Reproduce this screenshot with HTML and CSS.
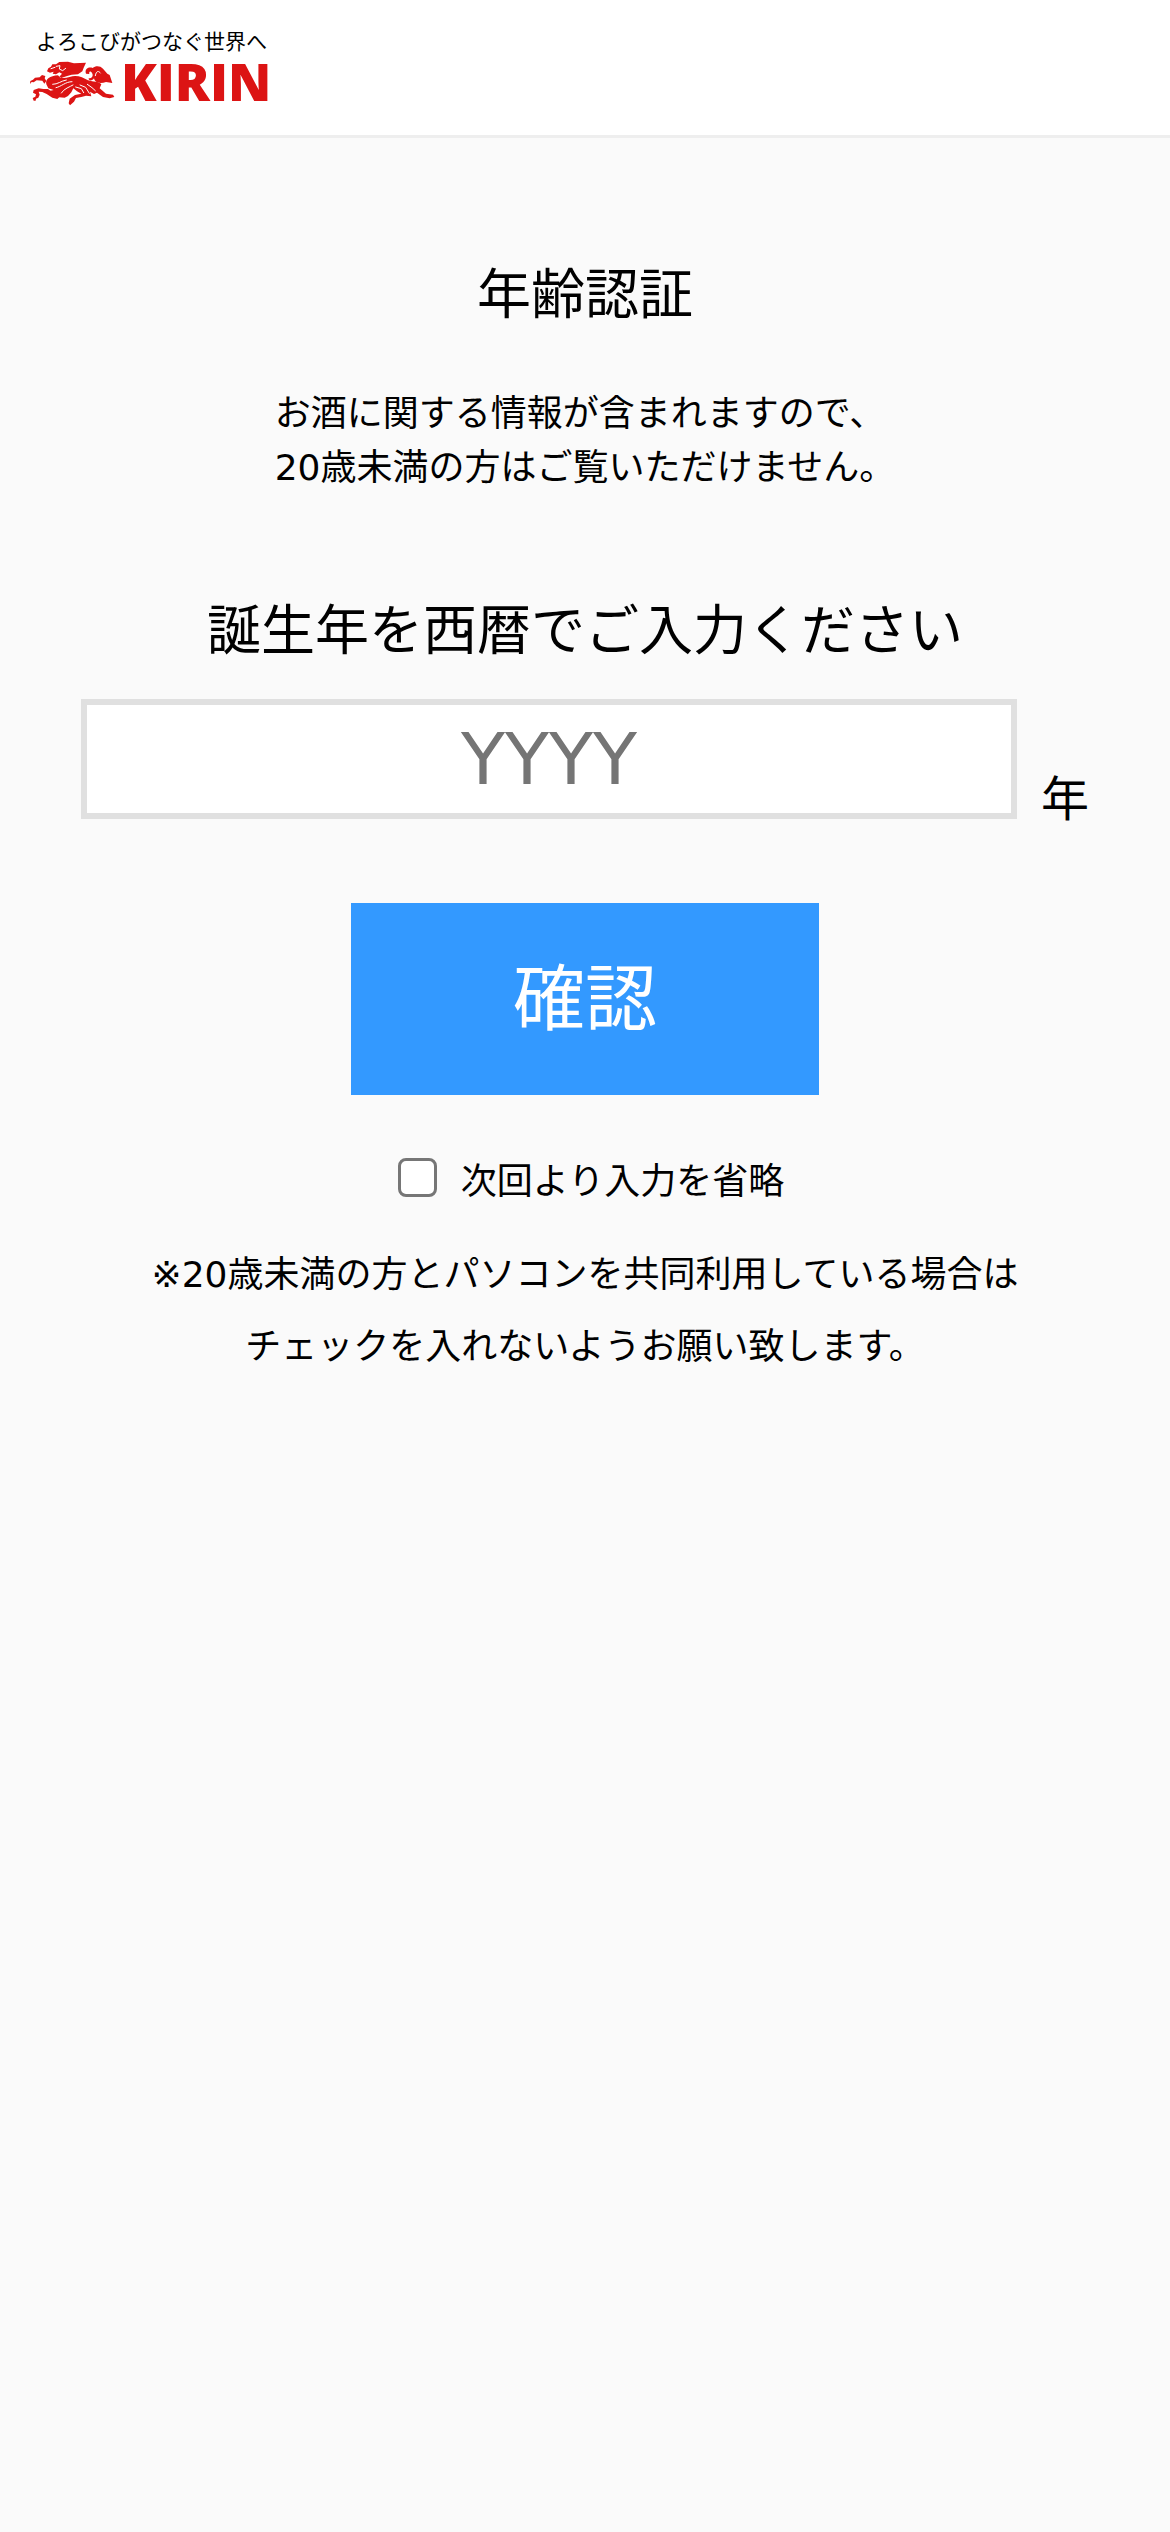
FILE: index.html
```html
<!DOCTYPE html>
<html lang="ja">
<head>
    <meta charset="UTF-8">
    <meta name="viewport" content="width=device-width, initial-scale=1.0">
    <title>年齢認証</title>
    <link rel="stylesheet" href="styles.css">
</head>
<body>

<header class="header">
    <a href="#" class="logo">
        <span class="logo-copy">よろこびがつなぐ世界へ</span>
        <span class="logo-brand">
            <svg class="logo-mark" viewBox="90 180 258 138" aria-hidden="true">
                <g fill="#dc1414">
                    <!-- 頭とたてがみ -->
                    <path d="M141 211 L145 202 L153 197 L157 190 L168 190 L178 183 L204 182 L222 187 L258 185 L252 198 L247 211 L234 220 L215 221 L199 226 L184 231 L178 227 L186 218 L178 214 L168 220 L158 218 L161 212 L150 215 Z"/>
                    <!-- 胴体 -->
                    <path d="M139 250 C135 234 150 225 174 223 L181 230 C196 234 214 225 225 225 C240 225 252 231 264 238 C281 244 295 240 304 250 L299 262 L306 268 L318 278 L339 281 L343 288 L329 292 L309 288 L291 275 L282 279 L270 272 L274 286 L258 284 L244 288 L228 291 L222 302 L210 313 L206 307 L209 293 L225 282 L244 278 L231 271 L220 262 L214 274 L204 285 L194 290 L177 289 L158 280 L148 270 L161 267 L145 262 Z"/>
                    <!-- 前脚 -->
                    <path d="M90 249 L91 240 L99 236 L105 230 L119 229 L126 222 L136 225 L134 232 L139 240 L133 248 L127 239 L110 238 L101 244 L95 243 Z"/>
                    <path d="M101 299 L98 291 L106 287 L108 280 L99 275 L101 267 L116 262 L130 264 L144 264 L161 276 L181 286 L172 294 L157 290 L140 279 L127 273 L116 272 L119 281 L115 290 L108 293 L107 299 Z"/>
                    <!-- 尾 -->
                    <path d="M258 218 C253 204 265 196 278 201 C287 193 301 194 309 203 L322 218 L329 222 L337 246 L318 243 C301 249 284 246 282 232 C277 241 265 240 266 232 C276 232 281 225 276 216 C272 209 266 210 268 219 Z"/>
                </g>
                <g fill="none" stroke="#fff" stroke-width="3" stroke-linecap="round">
                    <path d="M153 203 L165 199 M169 196 L180 194 L178 204 L188 209 L197 202"/>
                    <path d="M158 250 C174 250 182 240 199 237 M168 260 C184 257 196 242 216 242 M184 276 C191 263 211 257 219 252"/>
                    <path d="M227 258 L244 263 L251 275 M240 252 L257 259 L268 277 M262 250 L276 260 L286 269"/>
                    <path d="M286 224 C289 207 297 210 301 216"/>
                </g>
            </svg>
            <span class="logo-name">KIRIN</span>
        </span>
    </a>
</header>

<main class="main">
    <h1 class="title">年齢認証</h1>
    <p class="intro">お酒に関する情報が含まれますので、<br>20歳未満の方はご覧いただけません。</p>

    <form class="age-form">
        <label class="title" for="year">誕生年を西暦でご入力ください</label>
        <div class="year-row">
            <input type="text" class="year-input" id="year" placeholder="YYYY" maxlength="4" inputmode="numeric">
            <span class="year-unit">年</span>
        </div>
        <button type="submit" class="submit">確認</button>
        <div class="skip">
            <input type="checkbox" class="skip-check" id="skip">
            <label for="skip">次回より入力を省略</label>
        </div>
        <p class="note">※20歳未満の方とパソコンを共同利用している場合は<br>チェックを入れないようお願い致します。</p>
    </form>
</main>

</body>
</html>
```
FILE: styles.css
```css
* {
    box-sizing: border-box;
}

body {
    margin: 0;
    background: #fafafa;
    color: #000;
    font-family: "DejaVu Sans", "Noto Sans CJK JP", sans-serif;
    font-size: 36px;
    line-height: 54px;
}

.header {
    display: flex;
    padding: 28px 30px;
    background: #fff;
    border-bottom: 3px solid #eee;
}

.logo {
    display: flex;
    flex-direction: column;
    gap: 9px;
    color: #000;
    text-decoration: none;
}

.logo-copy {
    padding-left: 6px;
    font-family: "Noto Sans CJK JP", sans-serif;
    font-size: 21px;
    line-height: 24px;
}

.logo-brand {
    display: flex;
    align-items: flex-start;
    gap: 5px;
}

.logo-mark {
    width: 86px;
    height: 46px;
}

.logo-name {
    color: #dc1414;
    font-family: "Open Sans", sans-serif;
    font-size: 52px;
    font-weight: 800;
    line-height: 40px;
}

.main {
    padding: 117px 81px 0;
    text-align: center;
}

.title {
    display: block;
    margin: 0;
    font-size: 54px;
    font-weight: normal;
    line-height: 81px;
}

.intro {
    display: inline-block;
    margin: 51px 0 96px;
    text-align: left;
}

.year-row {
    display: flex;
    align-items: flex-end;
    gap: 24px;
    margin: 27px 0 84px;
}

.year-input {
    flex: 1;
    min-width: 0;
    height: 120px;
    padding: 0;
    border: 6px solid #e0e0e0;
    border-radius: 0;
    background: #fff;
    font: inherit;
    font-size: 72px;
    text-align: center;
}

.year-input::placeholder {
    color: #757575;
}

.year-unit {
    font-size: 48px;
    line-height: 40px;
}

.submit {
    display: block;
    width: 40vw;
    margin: 0 auto 60px;
    padding: 42px 0;
    border: 0;
    background: #39f;
    color: #fff;
    font: inherit;
    font-size: 72px;
    line-height: 108px;
    cursor: pointer;
}

.skip {
    display: flex;
    align-items: flex-start;
    justify-content: center;
    gap: 24px;
}

.skip-check {
    appearance: none;
    width: 39px;
    height: 39px;
    margin: 3px 0 0 12px;
    border: 3px solid #767676;
    border-radius: 8px;
    background: #fff;
}

.skip-check:checked {
    background: #39f;
}

.note {
    margin: 30px 0 0;
    line-height: 72px;
}
```
